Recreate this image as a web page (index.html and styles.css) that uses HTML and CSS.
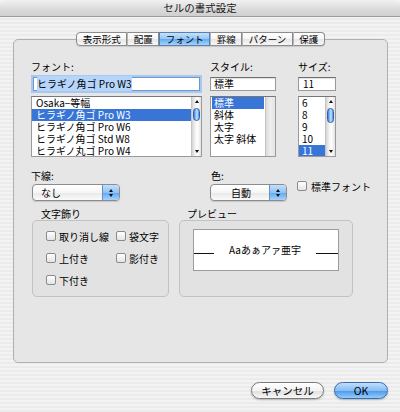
FILE: index.html
```html
<!DOCTYPE html>
<html lang="ja">
<head>
<meta charset="utf-8">
<title>セルの書式設定</title>
<link rel="stylesheet" href="styles.css">
</head>
<body>
<div class="window">
  <div class="titlebar">セルの書式設定</div>
  <div class="main">
    <div class="panel">
      <div class="tabs">
        <span class="tab">表示形式</span>
        <span class="tab">配置</span>
        <span class="tab active">フォント</span>
        <span class="tab">罫線</span>
        <span class="tab">パターン</span>
        <span class="tab">保護</span>
      </div>

      <div class="row1">
        <div class="col col-font">
          <div class="label">フォント:</div>
          <div class="field focus"><span class="textsel">ヒラギノ角ゴ Pro W3</span></div>
          <div class="list">
            <div class="items">
              <div class="item">Osaka−等幅</div>
              <div class="item sel">ヒラギノ角ゴ Pro W3</div>
              <div class="item">ヒラギノ角ゴ Pro W6</div>
              <div class="item">ヒラギノ角ゴ Std W8</div>
              <div class="item">ヒラギノ丸ゴ Pro W4</div>
            </div>
            <div class="scroll">
              <span class="arr up"></span>
              <span class="thumb t-font"></span>
              <span class="spacer"></span>
              <span class="arr down"></span>
            </div>
          </div>
        </div>
        <div class="col col-style">
          <div class="label">スタイル:</div>
          <div class="field">標準</div>
          <div class="list">
            <div class="items inset">
              <div class="item sel">標準</div>
              <div class="item">斜体</div>
              <div class="item">太字</div>
              <div class="item">太字 斜体</div>
            </div>
            <div class="scroll empty"></div>
          </div>
        </div>
        <div class="col col-size">
          <div class="label">サイズ:</div>
          <div class="field">11</div>
          <div class="list">
            <div class="items">
              <div class="item">6</div>
              <div class="item">8</div>
              <div class="item">9</div>
              <div class="item">10</div>
              <div class="item sel">11</div>
            </div>
            <div class="scroll">
              <span class="arr up"></span>
              <span class="thumb t-size"></span>
              <span class="spacer"></span>
              <span class="arr down"></span>
            </div>
          </div>
        </div>
      </div>

      <div class="row2">
        <div class="col-under">
          <div class="label">下線:</div>
          <div class="popup p-under">
            <span class="ptext left">なし</span>
            <span class="parrow"><i class="tri up"></i><i class="tri down"></i></span>
          </div>
        </div>
        <div class="col-color">
          <div class="label lab-color">色:</div>
          <div class="popup p-color">
            <span class="ptext center">自動</span>
            <span class="parrow"><i class="tri up"></i><i class="tri down"></i></span>
          </div>
        </div>
        <div class="col-std">
          <span class="cb"></span><span class="cbtext">標準フォント</span>
        </div>
      </div>

      <div class="row3">
        <div class="group g-deco">
          <div class="glabel">文字飾り</div>
          <div class="gbox deco">
            <div class="check"><span class="cb"></span>取り消し線</div>
            <div class="check"><span class="cb"></span>袋文字</div>
            <div class="check"><span class="cb"></span>上付き</div>
            <div class="check"><span class="cb"></span>影付き</div>
            <div class="check"><span class="cb"></span>下付き</div>
          </div>
        </div>
        <div class="group g-prev">
          <div class="glabel">プレビュー</div>
          <div class="gbox prev">
            <div class="preview">
              <span class="pline l"></span>
              <span class="ptxt">Aaあぁアァ亜宇</span>
              <span class="pline r"></span>
            </div>
          </div>
        </div>
      </div>
    </div>

    <div class="buttons">
      <span class="btn cancel">キャンセル</span>
      <span class="btn ok">OK</span>
    </div>
  </div>
</div>
</body>
</html>
```

FILE: styles.css
```css
html, body {
  margin: 0;
  padding: 0;
}
body {
  width: 400px;
  height: 412px;
  overflow: hidden;
  font-family: "Noto Sans CJK JP", "Noto Sans", sans-serif;
  font-size: 10px;
  color: #000;
}
.window {
  height: 412px;
  background: repeating-linear-gradient(to bottom, #f3f3f3 0 2px, #ebebeb 2px 4px);
}
.titlebar {
  height: 16px;
  line-height: 16px;
  text-align: center;
  font-size: 10.5px;
  color: #1a1a1a;
  border-bottom: 1px solid #9c9c9c;
  border-radius: 5px 5px 0 0;
  background: linear-gradient(#f1f1f1, #dadada 60%, #cfcfcf);
}
.main {
  padding: 22px 12px 0 13px;
}
.panel {
  box-sizing: border-box;
  height: 324px;
  border: 1px solid #b0b0b0;
  border-radius: 5px;
  background: #e6e6e6;
  padding-left: 17px;
}

/* tabs */
.tabs {
  display: flex;
  justify-content: center;
  margin: -8px 0 0 -17px;
  height: 14px;
  position: relative;
}
.tab {
  display: block;
  padding: 0 5.5px;
  font-size: 9.5px;
  line-height: 12px;
  border: 1px solid #8c8c8c;
  border-left: 1px solid #b4b4b4;
  background: linear-gradient(#ffffff, #f5f5f5 50%, #e6e6e6 51%, #f7f7f7);
  box-shadow: 0 1px 1px rgba(0,0,0,0.12);
}
.tab:first-child {
  border-left: 1px solid #8c8c8c;
  border-radius: 4px 0 0 4px;
}
.tab:last-child {
  border-radius: 0 4px 4px 0;
}
.tab.active {
  background: linear-gradient(#c4e1fc, #92c6f5 50%, #64a9ee 51%, #a3d3fc);
  border-color: #5b7fb5;
}

/* row 1 */
.row1 {
  display: flex;
  margin-top: 15px;
}
.col-font { width: 171px; }
.col-style { width: 66px; margin-left: 8px; }
.col-size { width: 38px; margin-left: 22px; }

.label {
  height: 12px;
  line-height: 12px;
  margin-bottom: 4px;
  white-space: nowrap;
}
.field {
  box-sizing: border-box;
  height: 14px;
  line-height: 12px;
  border: 1px solid #9a9a9a;
  border-top-color: #6f6f6f;
  background: #fff;
  padding-left: 3px;
  margin-bottom: 5px;
  white-space: nowrap;
  box-shadow: inset 0 1px 1px rgba(0,0,0,0.12);
}
.field.focus {
  margin-left: 2px;
  margin-right: 2px;
  border-color: #6c98d2;
  box-shadow: 0 0 0 2px #a9c8ef;
}
.textsel {
  background: #b6d5fb;
}
.col-size .field { padding-left: 4px; }

.list {
  box-sizing: border-box;
  height: 61px;
  border: 1px solid #9a9a9a;
  border-top-color: #777;
  background: #fff;
  display: flex;
}
.items {
  flex: 1;
  overflow: hidden;
}
.item {
  height: 12px;
  line-height: 12px;
  padding-left: 4px;
  white-space: nowrap;
}
.item.sel {
  background: #3875d7;
  color: #fff;
}
.items.inset {
  padding: 0 1px;
}
.items.inset .item {
  padding-left: 2px;
}
.col-size .item { padding-left: 3px; }

.scroll {
  width: 9px;
  border-left: 1px solid #c4c4c4;
  background: linear-gradient(90deg, #d4d4d4, #f2f2f2 35%, #ffffff 60%, #e2e2e2);
  display: flex;
  flex-direction: column;
  align-items: center;
}
.scroll.empty {
  background: linear-gradient(90deg, #dcdcdc, #eeeeee 50%, #e4e4e4);
}
.arr {
  display: block;
  width: 0;
  height: 0;
  border-left: 2px solid transparent;
  border-right: 2px solid transparent;
}
.arr.up {
  margin-top: 3px;
  border-bottom: 3px solid #111;
}
.arr.down {
  margin-bottom: 3px;
  border-top: 3px solid #111;
}
.thumb {
  display: block;
  width: 7px;
  height: 13px;
  margin-top: 5px;
  border-radius: 4px;
  border: 1px solid #2c5fae;
  box-sizing: border-box;
  background: linear-gradient(90deg, #3d7fd8, #9ccbfa 40%, #c6e3ff 60%, #4f90e2);
}
.t-size {
  height: 15px;
}
.spacer { flex: 1; }

/* row 2 */
.row2 {
  display: flex;
  margin-top: 13px;
}
.col-under { width: 179px; }
.col-color { width: 87px; }
.row2 .label { margin-bottom: 2px; }
.lab-color { padding-left: 1px; }
.popup {
  box-sizing: border-box;
  height: 17px;
  border: 1px solid #8c8c8c;
  border-radius: 4px;
  display: flex;
  background: linear-gradient(#ffffff, #f6f6f6 50%, #e8e8e8 51%, #fafafa);
  box-shadow: 0 1px 1px rgba(0,0,0,0.15);
}
.p-under { width: 88px; margin-left: 1px; }
.p-color { width: 77px; }
.ptext {
  flex: 1;
  line-height: 15px;
}
.ptext.left { padding-left: 8px; }
.ptext.center { text-align: center; padding-left: 2px; }
.parrow {
  width: 16px;
  border-left: 1px solid #6b8ec6;
  border-radius: 0 3px 3px 0;
  background: linear-gradient(#c2e0fc, #8fc3f4 50%, #5ea6ee 51%, #a6d4fd);
  display: flex;
  flex-direction: column;
  align-items: center;
  justify-content: center;
  gap: 2px;
}
.tri {
  display: block;
  width: 0;
  height: 0;
  border-left: 2.5px solid transparent;
  border-right: 2.5px solid transparent;
}
.tri.up { border-bottom: 3px solid #111; }
.tri.down { border-top: 3px solid #111; }

.col-std {
  display: flex;
  align-items: center;
  margin-top: 10px;
  height: 12px;
}
.cb {
  display: inline-block;
  box-sizing: border-box;
  width: 10px;
  height: 10px;
  border: 1px solid #8a8a8a;
  border-radius: 2px;
  background: linear-gradient(#ffffff, #e4e4e4);
  margin-right: 4px;
  flex: none;
}

/* row 3 */
.row3 {
  display: flex;
  margin-top: 7px;
}
.g-deco { width: 137px; margin-left: 1px; }
.g-prev { width: 174px; margin-left: 10px; }
.glabel {
  height: 12px;
  line-height: 12px;
  padding-left: 9px;
}
.g-prev .glabel { padding-left: 8px; }
.gbox {
  box-sizing: border-box;
  height: 77px;
  border: 1px solid #c2c2c2;
  border-radius: 5px;
  background: #e2e2e2;
}
.deco {
  display: grid;
  grid-template-columns: 70px auto;
  grid-auto-rows: 12px;
  row-gap: 10px;
  padding: 9px 0 0 13px;
}
.check {
  display: flex;
  align-items: center;
  white-space: nowrap;
}
.check .cb { margin-right: 3px; }
.prev {
  padding: 8px 0 0 13px;
}
.preview {
  box-sizing: border-box;
  width: 146px;
  height: 42px;
  border: 1px solid #9c9c9c;
  background: #fff;
  display: flex;
  align-items: center;
}
.pline {
  display: block;
  height: 1px;
  background: #111;
  margin-top: 6px;
}
.pline.l { width: 20px; }
.pline.r { width: 22px; }
.ptxt {
  flex: 1;
  text-align: center;
  line-height: 12px;
}

/* buttons */
.buttons {
  display: flex;
  justify-content: flex-end;
  gap: 10px;
  padding-top: 19px;
}
.btn {
  box-sizing: border-box;
  height: 17px;
  line-height: 15px;
  text-align: center;
  font-size: 10.5px;
  border: 1px solid #7a7a7a;
  border-radius: 9px;
  background: linear-gradient(#ffffff, #f3f3f3 50%, #dfdfdf 51%, #f7f7f7);
  box-shadow: 0 1px 2px rgba(0,0,0,0.25);
}
.btn.cancel { width: 73px; }
.btn.ok {
  width: 54px;
  border-color: #3d6cab;
  background: linear-gradient(#c0defc, #85bdf4 50%, #4d96e7 51%, #92cdff);
}
```
